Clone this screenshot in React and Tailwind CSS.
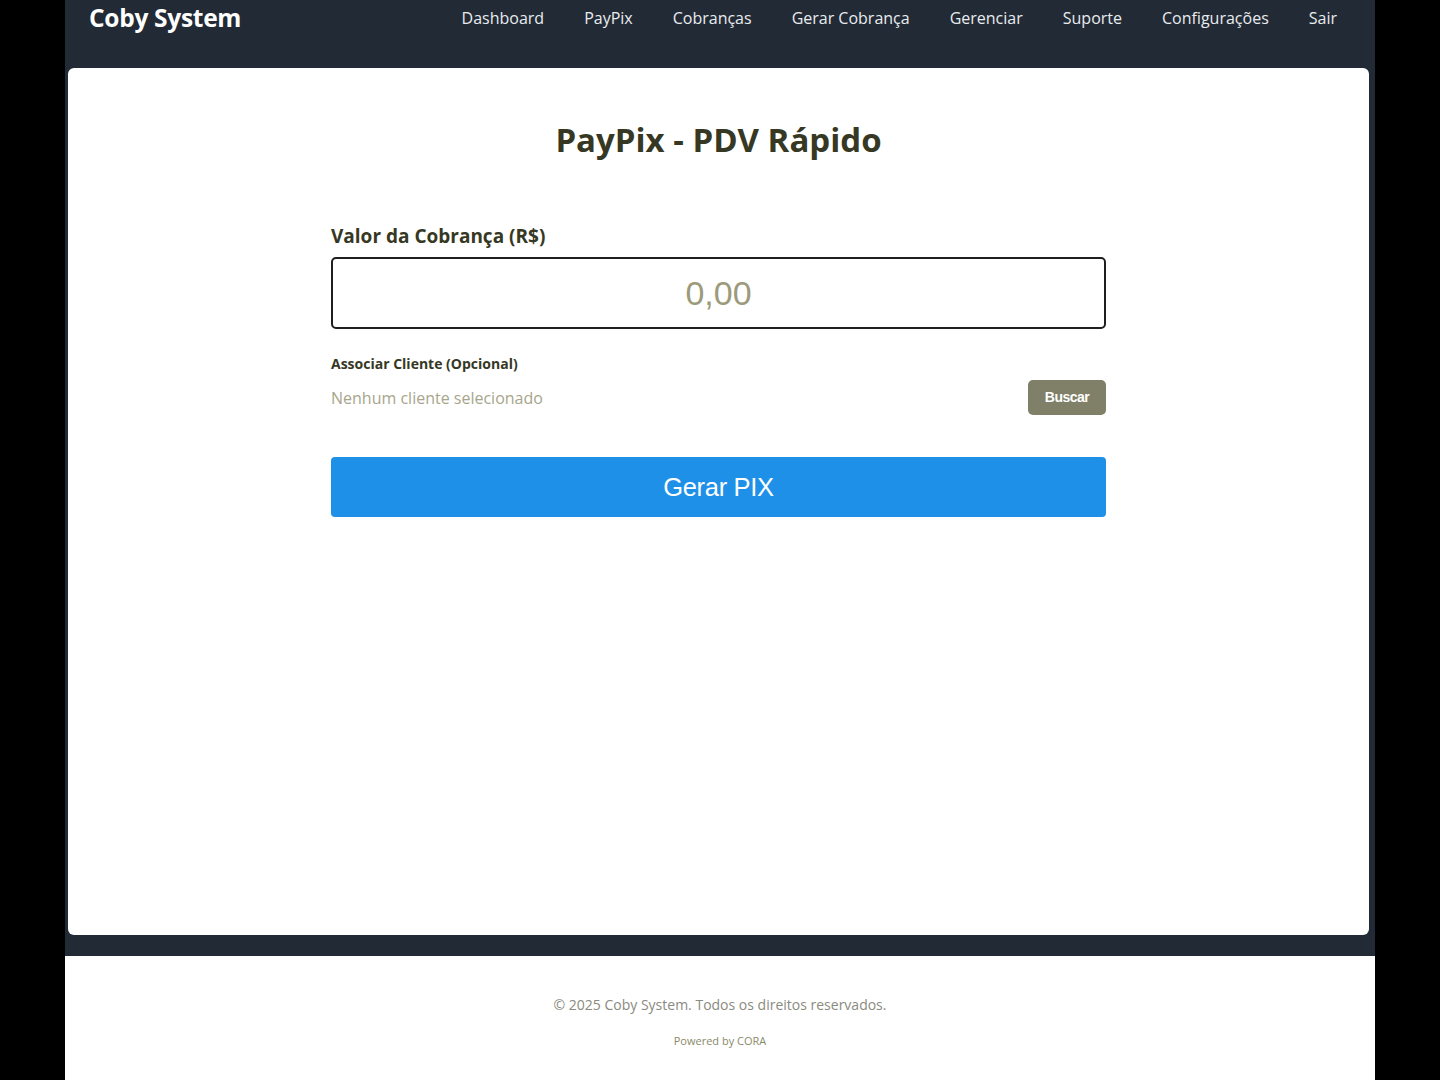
import React, { useState } from 'react';

const navItems = [
  'Dashboard',
  'PayPix',
  'Cobranças',
  'Gerar Cobrança',
  'Gerenciar',
  'Suporte',
  'Configurações',
  'Sair',
];

const font = "font-['Open_Sans','Noto_Sans',sans-serif]";

const App = () => {
  const [valor, setValor] = useState('');

  return (
    <div className="min-h-screen bg-black">
      <div className={`mx-auto w-[1310px] bg-[#222a35] ${font}`}>
        {/* Header */}
        <header className="h-[36px] flex items-center justify-between pl-6 pr-[38px]">
          <div className="text-[24.5px] font-bold text-white tracking-[-0.3px] leading-none">Coby System</div>
          <nav className="flex items-center gap-[40px]">
            {navItems.map((item) => (
              <a key={item} href="#" className="text-[16px] text-[#e9ecef] leading-none">
                {item}
              </a>
            ))}
          </nav>
        </header>

        {/* Main */}
        <main className="pt-[32px] pb-[21px]">
          <div className="ml-[3px] mr-[6px] h-[867px] bg-white rounded-[6px]">
            <h1 className="pt-[52px] text-center text-[33px] font-bold text-[#363824] leading-[40px]">
              PayPix - PDV Rápido
            </h1>

            <div className="mx-auto w-[775px] mt-[63px]">
              <label className="block text-[19px] font-bold text-[#363824] leading-[26px]">
                Valor da Cobrança (R$)
              </label>
              <input
                value={valor}
                onChange={(e) => setValor(e.target.value)}
                placeholder="0,00"
                className="mt-[8px] w-full h-[72px] border-2 border-[#1f1f1f] rounded-[5px] text-center text-[34px] font-['Liberation_Sans',Arial,sans-serif] text-[#333] placeholder:text-[#9c9a7a] outline-none"
              />

              <div className="mt-[25px] text-[14px] font-bold text-[#363824] leading-[20px]">
                Associar Cliente (Opcional)
              </div>
              <div className="mt-[6px] flex items-center justify-between">
                <span className="text-[16px] text-[#a7a68c]">Nenhum cliente selecionado</span>
                <button className="w-[78px] h-[35px] rounded-[5px] bg-[#7f8067] text-white text-[14px] font-bold font-['Liberation_Sans',Arial,sans-serif] tracking-[-0.5px]">
                  Buscar
                </button>
              </div>

              <button className="mt-[42px] w-full h-[60px] rounded-[4px] bg-[#1e90e8] text-white text-[25.5px] font-['Liberation_Sans',Arial,sans-serif] tracking-[-0.3px]">
                Gerar PIX
              </button>
            </div>
          </div>
        </main>

        {/* Footer */}
        <footer className="bg-white h-[124px] flex flex-col items-center pt-[39px]">
          <p className="text-[14px] text-[#8a8a80] leading-[20px]">
            © 2025 Coby System. Todos os direitos reservados.
          </p>
          <p className="mt-[18px] text-[11px] text-[#8a8a6a] leading-[16px]">Powered by CORA</p>
        </footer>
      </div>
    </div>
  );
};

export default App;
